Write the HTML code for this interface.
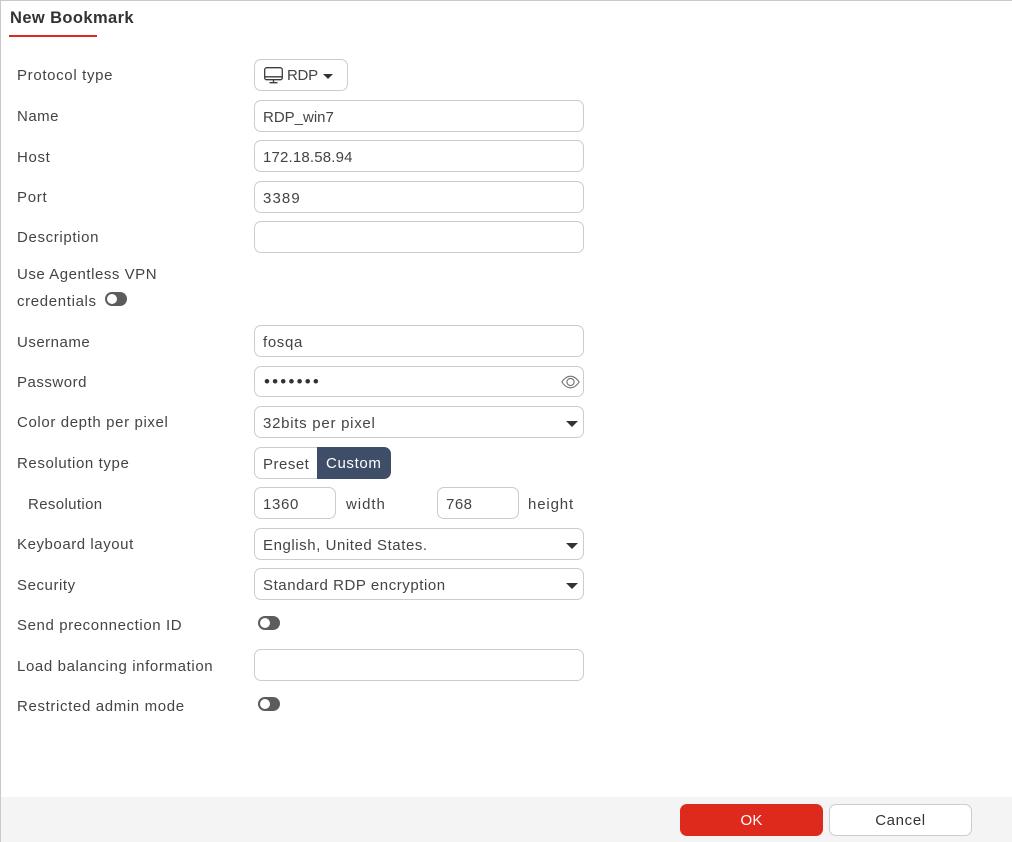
<!DOCTYPE html>
<html>
<head>
<meta charset="utf-8">
<style>
html,body{margin:0;padding:0;width:1012px;height:842px;overflow:hidden;background:#fff}
body{position:relative;font-family:"Liberation Sans",sans-serif;font-size:15px;color:#444;letter-spacing:.6px}
.a{position:absolute}
.l{position:absolute;left:17px;height:20px;line-height:22px;white-space:nowrap}
.i{position:absolute;box-sizing:border-box;border:1px solid #ccc;border-radius:7px;background:#fff;left:254px;width:330px;height:32px;line-height:33px;padding-left:8px;white-space:nowrap}
.c{position:absolute;right:5px;top:14px;width:0;height:0;border-left:6px solid transparent;border-right:6px solid transparent;border-top:6px solid #333}
.t{position:absolute;width:22px;height:14px;border-radius:7px;background:#5c5c5c}
.t:after{content:"";position:absolute;left:2px;top:2px;width:10px;height:10px;border-radius:5px;background:#fff}
</style>
</head>
<body>
<div class="a" style="left:0;top:0;width:1012px;height:1px;background:#c9c9c9"></div>
<div class="a" style="left:0;top:0;width:1px;height:842px;background:#c9c9c9"></div>
<div class="a" style="left:10px;top:9px;font-size:16.5px;font-weight:bold;color:#333;line-height:18px;letter-spacing:.4px">New Bookmark</div>
<div class="a" style="left:9px;top:35px;width:88px;height:2px;background:#de2a1c"></div>

<div class="l" style="top:65px;letter-spacing:.66px">Protocol type</div>
<div class="i" style="top:59px;width:94px;height:32px">
<svg class="a" style="left:9px;top:7px" width="19" height="17" viewBox="0 0 19 17" fill="none" stroke="#3c3c3c" stroke-width="1.3"><rect x=".7" y=".7" width="17.6" height="12" rx="2"/><path d="M.7 9.8h17.6M9.5 12.7v3M5.5 15.7h8"/></svg>
<span class="a" style="left:32px;top:-1px;letter-spacing:-.3px">RDP</span>
<div class="a" style="left:68px;top:14px;width:0;height:0;border-left:5px solid transparent;border-right:5px solid transparent;border-top:5px solid #333"></div>
</div>

<div class="l" style="top:106px;letter-spacing:.5px">Name</div>
<div class="i" style="top:100px;letter-spacing:0">RDP_win7</div>
<div class="l" style="top:147px;letter-spacing:.67px">Host</div>
<div class="i" style="top:140px;letter-spacing:.17px">172.18.58.94</div>
<div class="l" style="top:187px;letter-spacing:.7px">Port</div>
<div class="i" style="top:181px;letter-spacing:1.1px">3389</div>
<div class="l" style="top:227px;letter-spacing:.64px">Description</div>
<div class="i" style="top:221px"></div>

<div class="l" style="top:264px;letter-spacing:.54px">Use Agentless VPN</div>
<div class="l" style="top:291px;letter-spacing:.65px">credentials</div>
<div class="t" style="left:105px;top:292px"></div>

<div class="l" style="top:332px;letter-spacing:.5px">Username</div>
<div class="i" style="top:325px;letter-spacing:.65px">fosqa</div>
<div class="l" style="top:372px;letter-spacing:.52px">Password</div>
<div class="i" style="top:366px;height:31px;line-height:30px;padding-left:9px;font-size:17px;letter-spacing:2.2px;color:#333">•••••••
<svg class="a" style="right:3px;top:8px" width="19" height="14" viewBox="0 0 19 14" fill="none" stroke="#707070" stroke-width="1.1"><path d="M.8 7C3.5 3 6.3 1.2 9.5 1.2S15.5 3 18.2 7C15.5 11 12.7 12.8 9.5 12.8S3.5 11 .8 7Z"/><circle cx="9.5" cy="7" r="3.6"/></svg>
</div>
<div class="l" style="top:412px;letter-spacing:.62px">Color depth per pixel</div>
<div class="i" style="top:406px;letter-spacing:.73px">32bits per pixel<div class="c"></div></div>

<div class="l" style="top:453px">Resolution type</div>
<div class="i" style="top:447px;width:64px;border-radius:7px 0 0 7px;border-right:0;letter-spacing:.5px">Preset</div>
<div class="i" style="top:447px;left:317px;width:74px;background:#3f4e68;border:0;border-radius:0 7px 7px 0;color:#fff;line-height:34px;padding-left:9px;letter-spacing:.63px">Custom</div>

<div class="l" style="top:494px;left:28px;letter-spacing:.36px">Resolution</div>
<div class="i" style="top:487px;width:82px;letter-spacing:.65px">1360</div>
<div class="l" style="top:494px;left:346px;letter-spacing:.96px">width</div>
<div class="i" style="top:487px;left:437px;width:82px;letter-spacing:.5px">768</div>
<div class="l" style="top:494px;left:528px;letter-spacing:.85px">height</div>

<div class="l" style="top:534px;letter-spacing:.56px">Keyboard layout</div>
<div class="i" style="top:528px;letter-spacing:.56px">English, United States.<div class="c"></div></div>
<div class="l" style="top:575px;letter-spacing:.57px">Security</div>
<div class="i" style="top:568px;letter-spacing:.56px">Standard RDP encryption<div class="c"></div></div>
<div class="l" style="top:615px">Send preconnection ID</div>
<div class="t" style="left:258px;top:616px"></div>
<div class="l" style="top:656px;letter-spacing:.62px">Load balancing information</div>
<div class="i" style="top:649px"></div>
<div class="l" style="top:696px;letter-spacing:.64px">Restricted admin mode</div>
<div class="t" style="left:258px;top:697px"></div>

<div class="a" style="left:1px;top:797px;width:1011px;height:45px;background:#f4f4f4"></div>
<div class="a" style="left:680px;top:804px;width:143px;height:32px;background:#de2a1c;border-radius:7px;color:#fff;text-align:center;line-height:33px;letter-spacing:.2px">OK</div>
<div class="a" style="left:829px;top:804px;width:143px;height:32px;box-sizing:border-box;background:#fff;border:1px solid #ccc;border-radius:7px;color:#333;text-align:center;line-height:31px;letter-spacing:.65px">Cancel</div>
</body>
</html>
